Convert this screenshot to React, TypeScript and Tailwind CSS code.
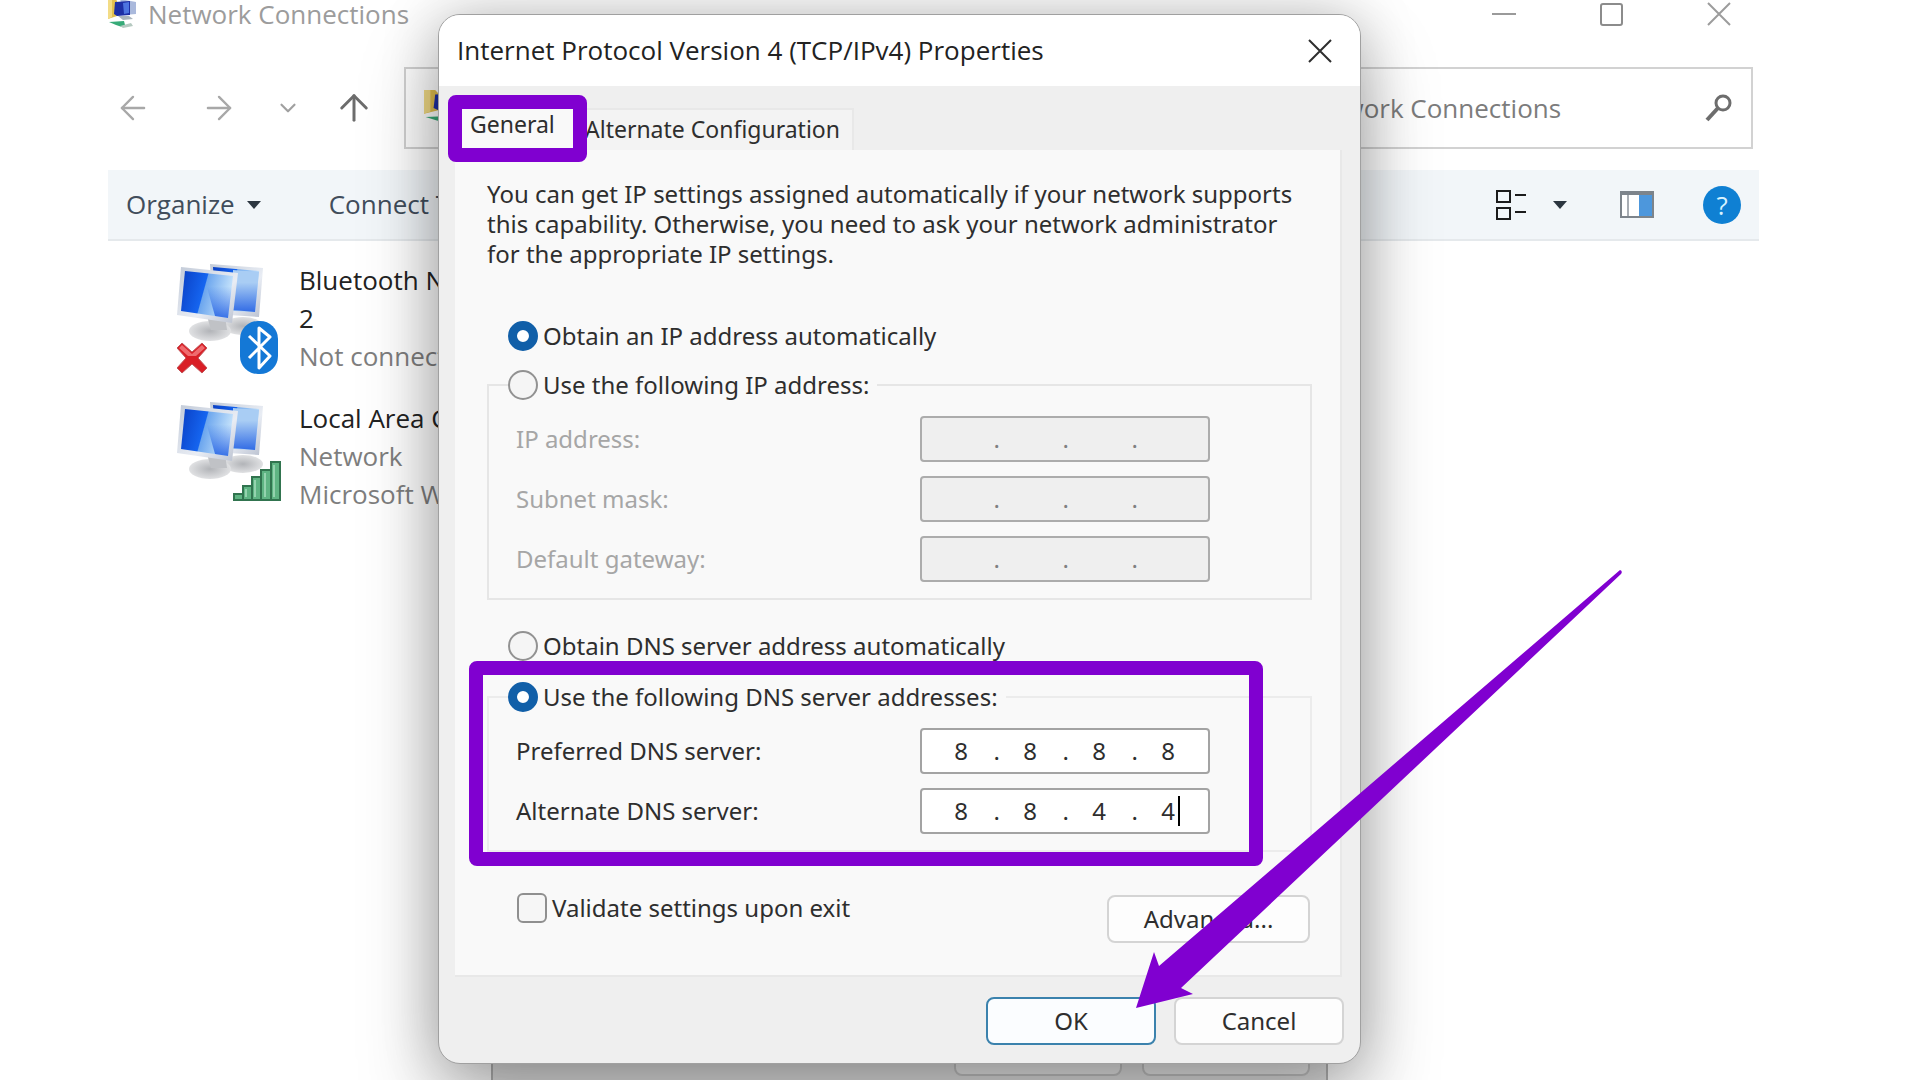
import React from 'react';
import { ArrowLeft, ArrowRight, ArrowUp, ChevronDown } from 'lucide-react';

const NetworkFolderIcon = ({ className }: { className: string }) => (
  <svg viewBox="0 0 30 32" preserveAspectRatio="none" className={`shrink-0 ${className}`} aria-hidden="true">
    <path d="M0 0h7l2 3v15l-9 3z" fill="#e2c04f" />
    <path d="M0 0h4v19l-4 2z" fill="#f3dc86" />
    <path d="M12 1l16 3v12l-12 1z" fill="#aab9dc" />
    <path d="M7 4l15-1v14l-13 1-3-2z" fill="#1d2fa6" />
    <path d="M15 5l6-1v11l-5 1z" fill="#4d74e0" />
    <path d="M10 18h11l4 3-10 1z" fill="#a9b4bd" />
    <path d="M1 24l15-1 1 4-3 2-6-2z" fill="#37ab78" />
    <path d="M12 28l11-3 2 3-10 2z" fill="#b5c9c0" />
  </svg>
);

interface ComputersIconProps {
  id: string;
  children: React.ReactNode;
}

const ComputersIcon: React.FC<ComputersIconProps> = ({ id, children }) => (
  <svg viewBox="0 0 108 112" className="mt-[3px] w-[108px] h-28 shrink-0" aria-hidden="true">
    <defs>
      <linearGradient id={`${id}-screen`} x1="0" y1="0" x2="1" y2="0.25">
        <stop offset="0" stopColor="#0a3fc4" />
        <stop offset="0.5" stopColor="#1565f0" />
        <stop offset="0.52" stopColor="#6ca6ee" />
        <stop offset="1" stopColor="#c4e2fb" />
      </linearGradient>
      <linearGradient id={`${id}-shade`} x1="0" y1="0" x2="0" y2="1">
        <stop offset="0.3" stopColor="#0a4be0" stopOpacity="0" />
        <stop offset="1" stopColor="#0a4be0" stopOpacity="0.75" />
      </linearGradient>
      <linearGradient id={`${id}-frame`} x1="0" y1="0" x2="1" y2="1">
        <stop offset="0" stopColor="#c3cbd8" />
        <stop offset="0.6" stopColor="#e9edf4" />
        <stop offset="1" stopColor="#b9c0cf" />
      </linearGradient>
      <radialGradient id={`${id}-stand`}>
        <stop offset="0" stopColor="#b2b4b8" />
        <stop offset="1" stopColor="#e0e1e3" />
      </radialGradient>
    </defs>
    <ellipse cx="66" cy="62" rx="20" ry="9" fill={`url(#${id}-stand)`} />
    <path d="M33 0l53 4-4 49-46-3z" fill={`url(#${id}-frame)`} />
    <path d="M36 3l46 4-4 41-39-2z" fill={`url(#${id}-screen)`} />
    <path d="M56 6l26 2-4 40-22-2z" fill="#a9cdf4" />
    <path d="M56 6l26 2-4 40-22-2z" fill={`url(#${id}-shade)`} />
    <ellipse cx="33" cy="67" rx="21" ry="10" fill={`url(#${id}-stand)`} />
    <path d="M30 52h18l2 14H34z" fill="#c0c2c6" />
    <path d="M4 3l57 6-6 50L0 51z" fill={`url(#${id}-frame)`} />
    <path d="M8 7l48 5-5 42-47-7z" fill={`url(#${id}-screen)`} />
    <path d="M26 9l30 3-5 42-13-2z" fill={`url(#${id}-shade)`} />
    {children}
  </svg>
);

const BluetoothConnectionIcon = () => (
  <ComputersIcon id="bt">
    <rect x="63" y="57" width="38" height="53" rx="18" fill="#1478d6" />
    <path d="M72 72l21 20-11 12V64l11 9-21 21" fill="none" stroke="#fff" strokeWidth="3" strokeLinejoin="round" />
    <path d="M0 84l5-5 10 9 10-9 5 5-9 10 9 10-5 5-10-9-10 9-5-5 9-10z" fill="#d91f26" stroke="#c2575b" strokeWidth="1" />
    <path d="M2 84l3-3 10 9 10-9 3 3-9 8h-8z" fill="#ef6c6f" />
  </ComputersIcon>
);

const WirelessConnectionIcon = () => (
  <ComputersIcon id="wifi">
    <g fill="#5fb483" stroke="#31744f" strokeWidth="2">
      <path d="M57 92h9v6h-9z" />
      <path d="M66 84h9v14h-9z" />
      <path d="M75 75h9v23h-9z" />
      <path d="M84 68h10v30H84z" />
      <path d="M94 60h9v38h-9z" />
    </g>
    <path d="M78 78v17M88 71v24M97 63v32M69 87v8" stroke="#94d3ae" strokeWidth="2" />
  </ComputersIcon>
);

const Caret = () => (
  <svg viewBox="0 0 14 8" className="w-[14px] h-2" aria-hidden="true">
    <path d="M0 0h14L7 8z" fill="#2c3640" />
  </svg>
);

const Cross = () => (
  <svg viewBox="0 0 24 24" className="w-6 h-6" fill="none" stroke="currentColor" strokeWidth="2" aria-hidden="true">
    <path d="M1 1l22 22M23 1L1 23" />
  </svg>
);

const connections = [
  {
    icon: <BluetoothConnectionIcon />,
    name: ['Bluetooth Network', '2'],
    details: ['Not connected'],
  },
  {
    icon: <WirelessConnectionIcon />,
    name: ['Local Area Connection'],
    details: ['Network', 'Microsoft Wi-Fi Direct'],
  },
];

const Explorer = () => (
  <div className="ml-[108px] mr-[161px] h-full font-['Open_Sans','Noto_Sans',sans-serif] text-[26px]">
    <header className="flex items-center h-7 text-[#9c9c9c]">
      <NetworkFolderIcon className="w-[30px] h-8" />
      <h1 className="ml-[10px] flex-1 leading-7 whitespace-nowrap">Network Connections</h1>
      <div className="flex items-center gap-[84px] pr-7">
        <button aria-label="Minimize" className="w-6 h-6 flex items-center">
          <span className="block w-full h-[2px] bg-[#9a9a9a]" />
        </button>
        <button aria-label="Maximize" className="w-[23px] h-[23px] border-2 border-[#8c8c8c] rounded-[3px]" />
        <button aria-label="Close window">
          <Cross />
        </button>
      </div>
    </header>

    <nav className="mt-[39px] flex items-center h-[82px] pl-[6px] pr-[6px]">
      <button aria-label="Back" className="text-[#a8a8a8]"><ArrowLeft size={38} strokeWidth={1.5} /></button>
      <button aria-label="Forward" className="ml-[48px] text-[#a8a8a8]"><ArrowRight size={38} strokeWidth={1.5} /></button>
      <button aria-label="Recent locations" className="ml-[37px] text-[#a0a0a0]"><ChevronDown size={26} strokeWidth={2} /></button>
      <button aria-label="Up" className="ml-8 text-[#6c6c6c]"><ArrowUp size={42} strokeWidth={1.7} /></button>
      <div className="ml-[29px] flex-1 flex items-center h-full border-2 border-[#d2d2d2] pl-[18px]">
        <NetworkFolderIcon className="w-12 h-9" />
      </div>
      <div className="ml-4 flex items-center w-[600px] h-full border-2 border-[#d2d2d2] pl-14 pr-[18px]">
        <input
          type="search"
          aria-label="Search Network Connections"
          placeholder="Search Network Connections"
          className="flex-1 min-w-0 bg-transparent placeholder:text-[#7c7c7c] outline-none"
        />
        <svg viewBox="0 0 28 28" className="w-7 h-7" fill="none" stroke="#6d6d6d" aria-hidden="true">
          <circle cx="18" cy="9" r="7" strokeWidth="3" />
          <path d="M13 14L2 26" strokeWidth="4" />
        </svg>
      </div>
    </nav>

    <div className="mt-[21px] flex items-center h-[71px] pl-[18px] pr-[18px] bg-[#f2f6f9] border-b-2 border-[#e5e9ec] text-[#414d5b]">
      <button className="flex items-center gap-3">Organize <Caret /></button>
      <button className="ml-[68px] whitespace-nowrap">Connect To</button>
      <div className="ml-auto flex items-center">
        <button aria-label="Change your view" className="flex items-center gap-[27px]">
          <svg viewBox="0 0 30 30" className="w-[30px] h-[30px]" fill="none" stroke="#1c1c1c" strokeWidth="2" aria-hidden="true">
            <path d="M1 1h13v11H1zM1 18h13v11H1zM19 5h11M19 22h11" />
          </svg>
          <Caret />
        </button>
        <button aria-label="Show the preview pane" className="ml-[53px]">
          <svg viewBox="0 0 34 27" className="w-[34px] h-[27px]" aria-hidden="true">
            <path d="M1 1h32v25H1z" fill="#fff" stroke="#7d848b" strokeWidth="2" />
            <path d="M1 1h32v3H1z" fill="#7d848b" />
            <path d="M8 4v21" stroke="#a8adb3" strokeWidth="2" />
            <path d="M19 4h13v21H19z" fill="#4d97dc" />
          </svg>
        </button>
        <button aria-label="Help" className="ml-[49px] w-[38px] h-[38px] rounded-full bg-[#0f80d3] text-[#d8f3ff] leading-[38px]">?</button>
      </div>
    </div>

    <ul className="pt-5 pl-[69px]">
      {connections.map((item) => (
        <li key={item.name[0]} className="flex gap-[14px] h-[138px] leading-[38px] whitespace-nowrap">
          {item.icon}
          <div className="w-[140px] overflow-hidden">
            {item.name.map((line) => <p key={line} className="text-[#222]">{line}</p>)}
            {item.details.map((line) => <p key={line} className="text-[#7e7e7e]">{line}</p>)}
          </div>
        </li>
      ))}
    </ul>
  </div>
);

interface AddressFieldProps {
  label: string;
  octets?: string[];
  disabled?: boolean;
  caret?: boolean;
}

const AddressField: React.FC<AddressFieldProps> = ({ label, octets = ['', '', '', ''], disabled, caret }) => {
  const id = label.toLowerCase().replace(/\W+/g, '-');
  return (
    <div className="flex items-center justify-between">
      <label htmlFor={id} className={disabled ? 'text-[#a6a6a6]' : ''}>{label}</label>
      <div
        className={`relative flex items-center w-[290px] h-[46px] pl-[9px] border-2 rounded-[4px] ${
          disabled ? 'border-[#acacac] bg-[#efefef] text-[#808080]' : 'border-[#a3a3a3] bg-white'
        }`}
      >
        {octets.map((octet, i) => (
          <React.Fragment key={i}>
            {i > 0 && <span className="w-[9px] text-right">.</span>}
            <input
              id={i === 0 ? id : undefined}
              aria-label={i > 0 ? `${label} part ${i + 1}` : undefined}
              defaultValue={octet}
              disabled={disabled}
              className="w-[60px] text-center bg-transparent outline-none"
            />
          </React.Fragment>
        ))}
        {caret && <span className="absolute right-7 top-[6px] w-[2px] h-[30px] bg-black" />}
      </div>
    </div>
  );
};

interface RadioProps {
  name: string;
  label: string;
  checked?: boolean;
}

const Radio: React.FC<RadioProps> = ({ name, label, checked }) => (
  <label className="flex items-center gap-[5px] h-8">
    <input
      type="radio"
      name={name}
      defaultChecked={checked}
      className="appearance-none w-[30px] h-[30px] rounded-full border-2 border-[#929292] bg-[#f5f5f5] checked:border-[9px] checked:border-[#115fa8] checked:bg-white"
    />
    {label}
  </label>
);

const Highlight = ({ className }: { className: string }) => (
  <div className={`absolute border-[14px] border-[#8000d0] rounded-lg pointer-events-none ${className}`} />
);

const PropertiesDialog = () => (
  <section
    role="dialog"
    aria-labelledby="dialog-title"
    className="absolute left-[438px] top-[14px] w-[923px] border border-[#a0a0a0] rounded-[22px] bg-[#efefef] shadow-[0_40px_80px_rgba(0,0,0,0.28),0_0_56px_rgba(0,0,0,0.22)] font-['Noto_Sans',sans-serif] text-[24px] text-[#2e2e2e]"
  >
    <header className="flex items-center justify-between h-[71px] pl-[18px] pr-7 bg-white rounded-t-[21px] font-['Open_Sans','Noto_Sans',sans-serif]">
      <h2 id="dialog-title" className="text-[26px] text-[#222]">Internet Protocol Version 4 (TCP/IPv4) Properties</h2>
      <button aria-label="Close"><Cross /></button>
    </header>

    <div role="tablist" className="flex items-end h-16 pl-4 text-[23px]">
      <button role="tab" aria-selected="true" className="relative w-[128px] h-[46px] pl-[15px] pb-[6px] bg-[#f9f9f9] text-left">
        General
        <Highlight className="-left-[7px] -top-[9px] w-[139px] h-[67px] z-10" />
      </button>
      <button role="tab" aria-selected="false" className="w-[271px] h-[42px] pl-[2px] pb-[2px] bg-[#f3f3f3] border-t-2 border-r-2 border-[#e8e8e8] text-left whitespace-nowrap">
        Alternate Configuration
      </button>
    </div>

    <div className="ml-4 mr-[18px] pt-[29px] pb-8 pl-8 pr-7 bg-[#f9f9f9] border-r-2 border-b-2 border-[#e8e8e8]">
      <p className="leading-[30px] whitespace-nowrap">
        You can get IP settings assigned automatically if your network supports<br />
        this capability. Otherwise, you need to ask your network administrator<br />
        for the appropriate IP settings.
      </p>

      <div className="mt-[51px] pl-[21px]">
        <Radio name="ip" label="Obtain an IP address automatically" checked />
      </div>
      <fieldset className="mt-[17px] pl-[19px] pr-[100px] pb-4 border-2 border-[#e6e6e6]">
        <legend className="pr-2"><Radio name="ip" label="Use the following IP address:" /></legend>
        <div className="pt-[15px] pl-2 space-y-[14px]">
          <AddressField label="IP address:" disabled />
          <AddressField label="Subnet mask:" disabled />
          <AddressField label="Default gateway:" disabled />
        </div>
      </fieldset>

      <div className="mt-[30px] pl-[21px]">
        <Radio name="dns" label="Obtain DNS server address automatically" />
      </div>
      <div className="relative mt-[19px]">
        <fieldset className="pl-[19px] pr-[100px] pb-4 border-2 border-[#ececec]">
          <legend className="pr-2"><Radio name="dns" label="Use the following DNS server addresses:" checked /></legend>
          <div className="pt-[15px] pl-2 space-y-[14px]">
            <AddressField label="Preferred DNS server:" octets={['8', '8', '8', '8']} />
            <AddressField label="Alternate DNS server:" octets={['8', '8', '4', '4']} caret />
          </div>
        </fieldset>
        <Highlight className="-left-[18px] -top-5 right-[49px] -bottom-[14px]" />
      </div>

      <div className="mt-10 flex items-start justify-between pl-[30px]">
        <label className="flex items-center gap-[5px] h-8">
          <input type="checkbox" className="appearance-none w-[30px] h-[30px] border-2 border-[#8f8f8f] rounded-[6px] bg-[#f6f6f6]" />
          Validate settings upon exit
        </label>
        <button className="mt-[3px] mr-[2px] w-[203px] h-12 bg-[#fdfdfd] border-2 border-[#d4d4d4] rounded-lg">Advanced...</button>
      </div>
    </div>

    <footer className="flex justify-end gap-[18px] pt-5 pb-[18px] pr-4">
      <button className="w-[170px] h-12 bg-[#fbfdff] border-2 border-[#3b82ad] rounded-lg">OK</button>
      <button className="w-[170px] h-12 bg-[#fdfdfd] border-2 border-[#d4d4d4] rounded-lg">Cancel</button>
    </footer>
  </section>
);

// Parent properties window, only its lower edge shows under the dialog
const ParentDialog = () => (
  <div className="absolute left-[491px] top-[900px] w-[837px] h-[180px] bg-[#e4e4e4] border-x-2 border-[#b4b4b4] flex justify-end items-end gap-5 pr-4 pb-1">
    <div className="w-[168px] h-12 border-2 border-[#c8c8c8] bg-[#efefef] rounded-lg" />
    <div className="w-[168px] h-12 border-2 border-[#c8c8c8] bg-[#efefef] rounded-lg" />
  </div>
);

const Arrow = () => (
  <svg
    viewBox="0 0 488 440"
    className="absolute left-[1135px] top-[569px] w-[488px] h-[440px] pointer-events-none"
    aria-hidden="true"
  >
    <path d="M485 1q3 1 1 4L46 419l12 6-57 14 18-56 5 14z" fill="#8000d0" />
  </svg>
);

export default function App() {
  return (
    <main className="relative h-screen overflow-hidden bg-white">
      <Explorer />
      <ParentDialog />
      <PropertiesDialog />
      <Arrow />
    </main>
  );
}
